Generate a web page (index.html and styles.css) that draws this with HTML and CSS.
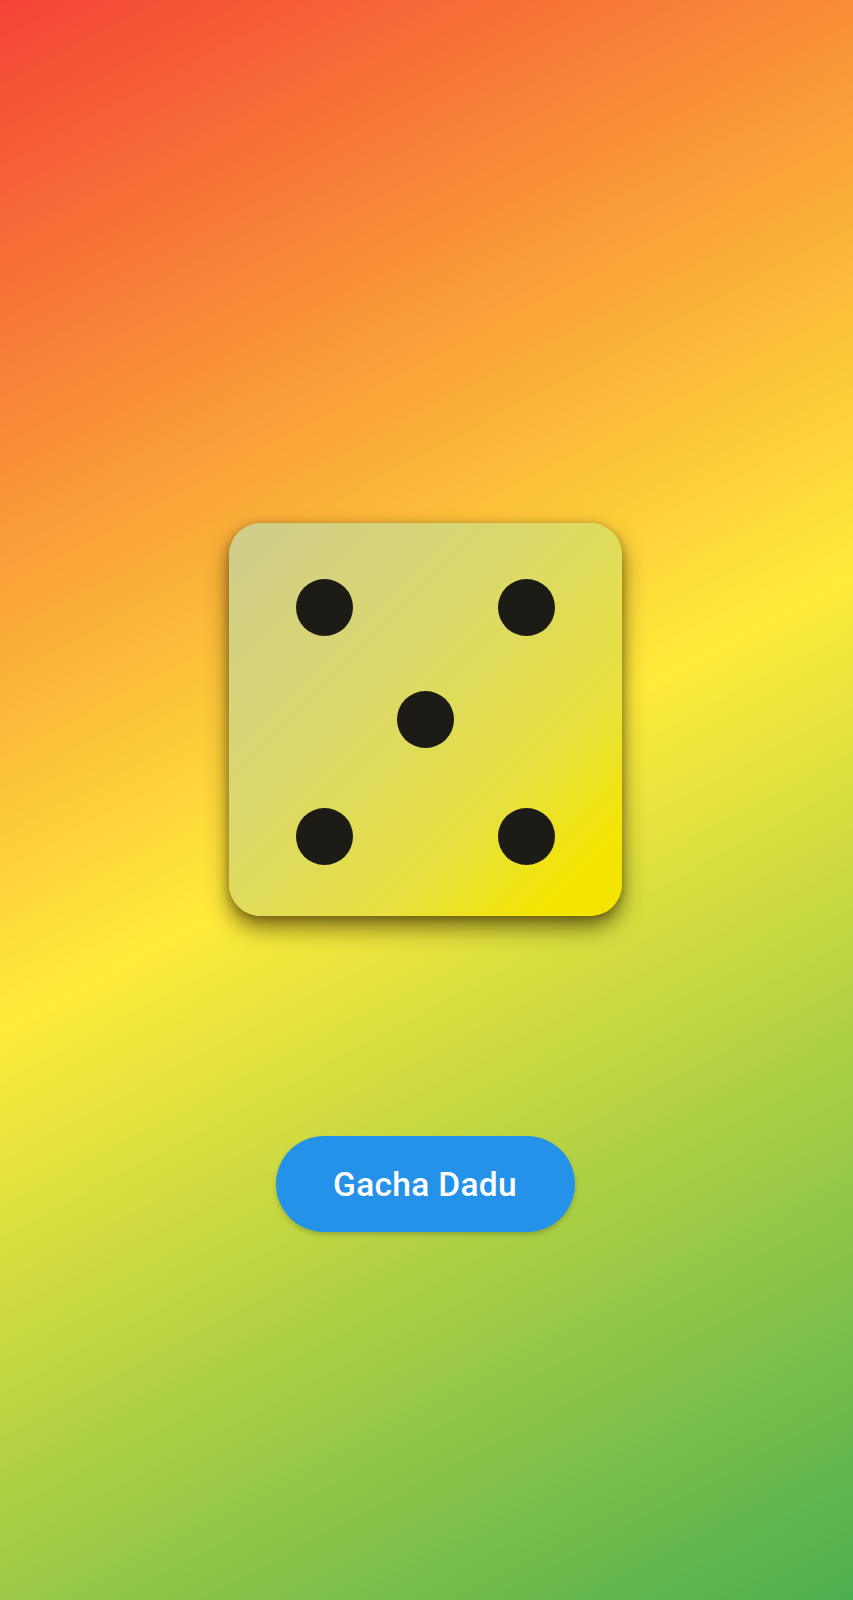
FILE: index.html
```html
<!DOCTYPE html>
<html lang="id">
<head>
<meta charset="utf-8">
<title>Gacha Dadu</title>
<link rel="stylesheet" href="styles.css">
</head>
<body>
<main class="screen">
  <div class="dice">
    <span class="pip p-tl"></span>
    <span class="pip p-tr"></span>
    <span class="pip p-c"></span>
    <span class="pip p-bl"></span>
    <span class="pip p-br"></span>
  </div>
  <button class="roll-btn" type="button">Gacha Dadu</button>
</main>
</body>
</html>
```
FILE: styles.css
```css
html, body {
  margin: 0;
  padding: 0;
  width: 853px;
  height: 1600px;
  overflow: hidden;
}

body {
  font-family: Roboto, "Noto Sans", sans-serif;
  background: linear-gradient(151.94deg, #f44336 0%, #ffeb3b 50%, #4caf50 100%);
}

.screen {
  box-sizing: border-box;
  height: 1600px;
  display: flex;
  flex-direction: column;
  align-items: center;
  padding-top: 523px;
  padding-right: 3px;
}

.dice {
  box-sizing: border-box;
  width: 393px;
  height: 393px;
  border-radius: 32px;
  background: linear-gradient(135deg, #cfcd8c 0%, #dad770 35%, #e7e040 70%, #f4e500 90%);
  box-shadow: 0 12px 22px rgba(50, 35, 0, 0.6), 0 2px 8px rgba(50, 35, 0, 0.35);
  display: grid;
  grid-template-columns: 57px 57px 57px;
  grid-template-rows: 112px 117px 57px;
  column-gap: 44px;
  padding-top: 56px;
  padding-left: 67px;
  align-items: start;
}

.pip {
  width: 57px;
  height: 57px;
  border-radius: 50%;
  background: #1c1b16;
}

.p-tl { grid-column: 1; grid-row: 1; }
.p-tr { grid-column: 3; grid-row: 1; }
.p-c  { grid-column: 2; grid-row: 2; }
.p-bl { grid-column: 1; grid-row: 3; }
.p-br { grid-column: 3; grid-row: 3; }

.roll-btn {
  margin-top: 220px;
  width: 299px;
  height: 96px;
  border: none;
  border-radius: 48px;
  background: #2592ea;
  color: #ffffff;
  font-family: Roboto, "Noto Sans", sans-serif;
  font-weight: 500;
  font-size: 33.5px;
  letter-spacing: 0.3px;
  box-shadow: 0 3px 5px rgba(0, 0, 0, 0.18);
  cursor: pointer;
}
```
